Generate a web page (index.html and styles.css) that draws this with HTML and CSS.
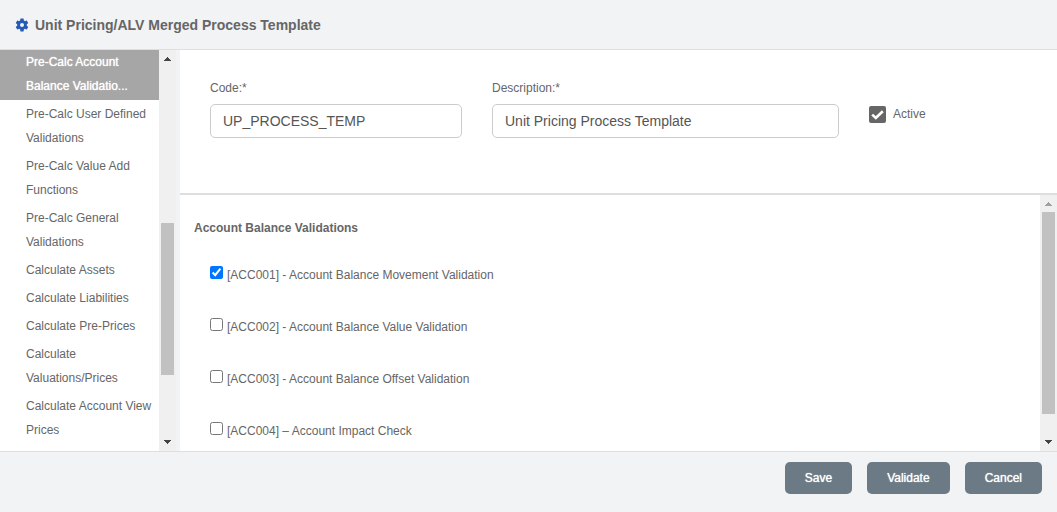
FILE: index.html
```html
<!DOCTYPE html>
<html lang="en">
<head>
<meta charset="utf-8">
<meta name="viewport" content="width=device-width, initial-scale=1">
<title>Unit Pricing/ALV Merged Process Template</title>
<link rel="stylesheet" href="styles.css">
</head>
<body>
<header class="header">
  <svg class="gear" viewBox="0 0 24 24" aria-hidden="true"><path d="M19.14 12.94c.04-.3.06-.61.06-.94 0-.32-.02-.64-.07-.94l2.03-1.58a.49.49 0 0 0 .12-.61l-1.92-3.32a.49.49 0 0 0-.59-.22l-2.39.96a7.03 7.03 0 0 0-1.62-.94l-.36-2.54a.48.48 0 0 0-.48-.41h-3.84a.47.47 0 0 0-.47.41l-.36 2.54c-.59.24-1.13.57-1.62.94l-2.39-.96a.48.48 0 0 0-.59.22L2.74 8.87a.47.47 0 0 0 .12.61l2.03 1.58c-.05.3-.09.63-.09.94s.02.64.07.94l-2.03 1.58a.49.49 0 0 0-.12.61l1.92 3.32c.12.22.37.29.59.22l2.39-.96c.5.38 1.03.7 1.62.94l.36 2.54c.05.24.24.41.48.41h3.84c.24 0 .44-.17.47-.41l.36-2.54a6.9 6.9 0 0 0 1.62-.94l2.39.96c.22.08.47 0 .59-.22l1.92-3.32a.47.47 0 0 0-.12-.61zM12 15a3 3 0 1 1 0-6 3 3 0 0 1 0 6z"/></svg>
  <h1 class="title">Unit Pricing/ALV Merged Process Template</h1>
</header>
<div class="body">
  <nav class="sidebar" aria-label="Process steps">
    <ul class="steps">
      <li><a class="step step-active" href="#" aria-current="step">Pre-Calc Account Balance Validatio...</a></li>
      <li><a class="step" href="#">Pre-Calc User Defined Validations</a></li>
      <li><a class="step" href="#">Pre-Calc Value Add Functions</a></li>
      <li><a class="step" href="#">Pre-Calc General Validations</a></li>
      <li><a class="step" href="#">Calculate Assets</a></li>
      <li><a class="step" href="#">Calculate Liabilities</a></li>
      <li><a class="step" href="#">Calculate Pre-Prices</a></li>
      <li><a class="step" href="#">Calculate Valuations/Prices</a></li>
      <li><a class="step" href="#">Calculate Account View Prices</a></li>
    </ul>
    <div class="scrollbar" aria-hidden="true">
      <svg class="arrow" viewBox="0 0 17 17"><path d="M8 7h1v1h1v1h1v1h1v1H5v-1h1V9h1V8h1z"/></svg>
      <div class="track track-steps"><div class="thumb"></div></div>
      <svg class="arrow" viewBox="0 0 17 17"><path d="M5 6h7v1h-1v1h-1v1H9v1H8V9H7V8H6V7H5z"/></svg>
    </div>
  </nav>
  <main class="main">
    <section class="fields">
      <div class="field field-code">
        <label for="code">Code:*</label>
        <input class="textbox" id="code" type="text" value="UP_PROCESS_TEMP">
      </div>
      <div class="field field-description">
        <label for="description">Description:*</label>
        <input class="textbox" id="description" type="text" value="Unit Pricing Process Template">
      </div>
      <label class="active-option">
        <span class="tick">
          <input class="tick-input" type="checkbox" checked>
          <svg class="tick-mark" viewBox="0 0 17 17" aria-hidden="true"><path d="M3.2 8.6 6.8 12 13.8 5.2"/></svg>
        </span>
        Active
      </label>
    </section>
    <section class="validations">
      <div class="validation-list">
        <h2 class="subtitle">Account Balance Validations</h2>
        <label class="option"><input class="option-input" type="checkbox" checked><span>[ACC001] - Account Balance Movement Validation</span></label>
        <label class="option"><input class="option-input" type="checkbox"><span>[ACC002] - Account Balance Value Validation</span></label>
        <label class="option"><input class="option-input" type="checkbox"><span>[ACC003] - Account Balance Offset Validation</span></label>
        <label class="option"><input class="option-input" type="checkbox"><span>[ACC004] – Account Impact Check</span></label>
      </div>
      <div class="scrollbar" aria-hidden="true">
        <svg class="arrow arrow-off" viewBox="0 0 17 17"><path d="M8 7h1v1h1v1h1v1h1v1H5v-1h1V9h1V8h1z"/></svg>
        <div class="track track-validations"><div class="thumb"></div></div>
        <svg class="arrow" viewBox="0 0 17 17"><path d="M5 6h7v1h-1v1h-1v1H9v1H8V9H7V8H6V7H5z"/></svg>
      </div>
    </section>
  </main>
</div>
<footer class="footer">
  <button class="button" type="button">Save</button>
  <button class="button" type="button">Validate</button>
  <button class="button" type="button">Cancel</button>
</footer>
</body>
</html>
```
FILE: styles.css
```css
* { box-sizing: border-box; }

body {
  margin: 0;
  height: 100vh;
  display: flex;
  flex-direction: column;
  background: #f2f3f5;
  color: #666;
  font: 12px/24px "Liberation Sans", Arial, sans-serif;
}

.header {
  display: flex;
  align-items: center;
  gap: 5px;
  padding: 13px 14px 12px;
  border-bottom: 1px solid #dedede;
}

.gear { width: 16px; height: 16px; fill: #2459b5; }

.title { margin: 0; font-size: 14px; font-weight: bold; }

.body { flex: 1; min-height: 0; display: flex; }

.sidebar { display: flex; width: 176px; flex: none; background: #fff; }

.steps {
  flex: 1;
  margin: 0;
  padding: 0;
  list-style: none;
  overflow: hidden;
}

.step {
  display: block;
  padding: 2px 4px 2px 26px;
  color: inherit;
  text-decoration: none;
}

.step-active {
  padding-top: 0;
  background: #a6a6a6;
  color: #fff;
  text-shadow: 0 0 1px #fff;
}

.scrollbar {
  display: flex;
  flex-direction: column;
  flex: none;
  width: 17px;
  background: #f0f0f0;
}

.arrow { flex: none; width: 17px; height: 17px; fill: #444; shape-rendering: crispEdges; }
.arrow-off { fill: #a0a0a0; }

.track { flex: 1; display: grid; padding: 0 2px; }
.track-steps { grid-template-rows: 156fr 152fr 59fr; }
.track-validations { grid-template-rows: 0fr 202fr 20fr; }
.thumb { grid-row: 2; background: #c1c1c1; }

.main {
  flex: 1;
  min-width: 0;
  display: flex;
  flex-direction: column;
  margin-left: 4px;
  background: #fff;
}

.fields {
  display: flex;
  gap: 30px;
  padding: 26px 30px 55px;
  border-bottom: 2px solid #dedede;
}

.field { display: flex; flex-direction: column; gap: 4px; }
.field-code { flex: 0 1 252px; }
.field-description { flex: 0 1 347px; }

.textbox {
  width: 100%;
  height: 34px;
  padding: 0 12px;
  border: 1px solid #ccc;
  border-radius: 5px;
  background: #fff;
  color: #555;
  font: 14px "Liberation Sans", Arial, sans-serif;
}

.active-option { display: flex; align-items: center; align-self: center; gap: 7px; padding-top: 14px; }

.tick { display: grid; width: 17px; height: 17px; }
.tick-input,
.tick-mark { grid-area: 1 / 1; width: 17px; height: 17px; }
.tick-input { appearance: none; margin: 0; border-radius: 2px; background: #666; }
.tick-mark { fill: none; stroke: #fff; stroke-width: 2.6; pointer-events: none; }

.validations { flex: 1; min-height: 0; display: flex; }

.validation-list {
  flex: 1;
  display: flex;
  flex-direction: column;
  align-items: flex-start;
  gap: 28px;
  padding: 21px 14px 0;
  overflow: hidden;
}

.subtitle { margin: 0 0 -5px; font-size: 12px; font-weight: bold; }

.option { display: flex; align-items: flex-start; gap: 4px; padding-left: 16px; }
.option-input { flex: none; width: 13px; height: 13px; margin: 3px 0 0; }

.footer {
  display: flex;
  justify-content: flex-end;
  gap: 15px;
  padding: 10px 15px 18px;
  border-top: 1px solid #dedede;
}

.button {
  height: 32px;
  padding: 0 20px;
  border: 0;
  border-radius: 5px;
  background: #6b7a84;
  color: #fff;
  font: 12px "Liberation Sans", Arial, sans-serif;
  text-shadow: 0 0 1px #fff;
}
```
